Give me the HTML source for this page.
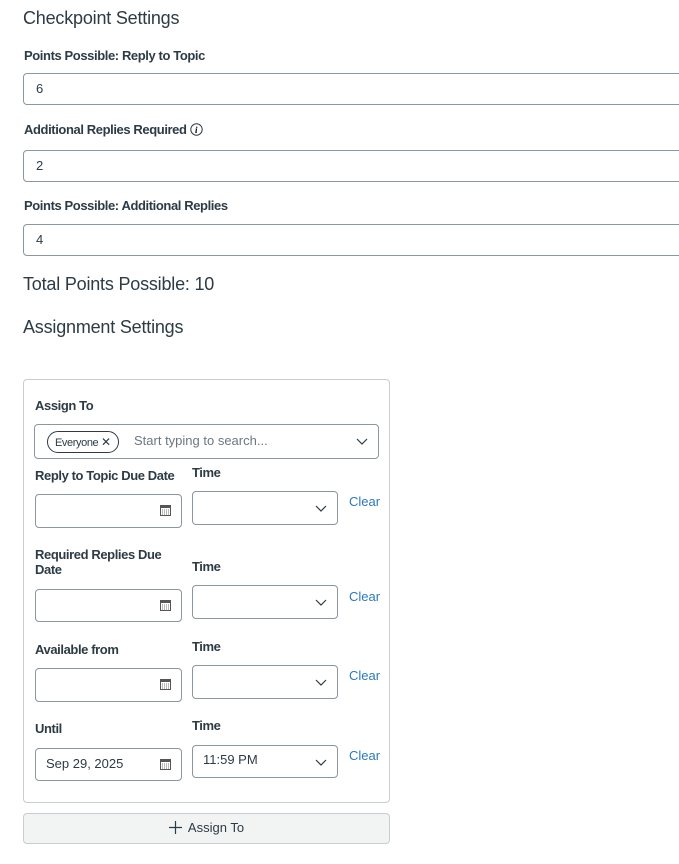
<!DOCTYPE html>
<html><head><style>
body{margin:0;width:679px;height:864px;overflow:hidden;background:#fff;font-family:"Liberation Sans",sans-serif;color:#2d3b45;position:relative}
.a{position:absolute}
h{position:absolute;font-size:18px;left:23px;letter-spacing:-0.2px}
.lb{position:absolute;font-size:13px;font-weight:bold;left:24px;letter-spacing:-0.4px}
.in{position:absolute;border:1px solid #8b969e;border-radius:4px;background:#fff;box-sizing:border-box;font-size:13px}
.tx{position:absolute;left:12px;top:7px}
.cal{position:absolute;right:10px;top:9px;width:11px;height:12px}
.chev{position:absolute;right:10px;top:10px}
.clr{position:absolute;left:349px;color:#2b7abc;font-size:13px}
.fl{position:absolute;left:35px;font-size:13px;font-weight:bold;line-height:15px;letter-spacing:-0.4px}
</style></head><body>
<h style="top:8px">Checkpoint Settings</h>
<div class="lb" style="top:48px">Points Possible: Reply to Topic</div>
<div class="in" style="left:23px;top:73px;width:670px;height:32px"><span class="tx">6</span></div>
<div class="lb" style="top:122px">Additional Replies Required <svg width="13" height="13" viewBox="0 0 13 13" style="vertical-align:-2px"><circle cx="6.5" cy="6.5" r="5.7" fill="none" stroke="#2d3b45" stroke-width="1"/><text x="5" y="10" font-size="9" font-style="italic" font-family="Liberation Serif">i</text></svg></div>
<div class="in" style="left:23px;top:150px;width:670px;height:32px"><span class="tx">2</span></div>
<div class="lb" style="top:198px">Points Possible: Additional Replies</div>
<div class="in" style="left:23px;top:224px;width:670px;height:32px"><span class="tx">4</span></div>
<h style="top:274px">Total Points Possible: 10</h>
<h style="top:317px">Assignment Settings</h>

<div class="a" style="left:23px;top:379px;width:367px;height:424px;border:1px solid #c7cdd1;border-radius:4px;box-sizing:border-box"></div>
<div class="fl" style="top:398px">Assign To</div>
<div class="in" style="left:34px;top:424px;width:345px;height:35px">
 <span class="a" style="left:12px;top:6px;height:20px;border:1px solid #2d3b45;border-radius:11px;padding:0 7px;font-size:11px;line-height:20px;letter-spacing:-0.4px">Everyone <span style="font-size:12px">✕</span></span>
 <span class="a" style="left:99px;top:8px;color:#6b7780">Start typing to search...</span>
 <svg class="chev" width="12" height="8" viewBox="0 0 12 8" style="top:13px"><path d="M1 1l5 5 5-5" fill="none" stroke="#2d3b45" stroke-width="1.2"/></svg>
</div>

<div class="fl" style="top:468px">Reply to Topic Due Date</div>
<div class="fl" style="left:192px;top:465px">Time</div>
<div class="in" style="left:35px;top:494px;width:147px;height:34px"><svg class="cal" viewBox="0 0 11 12"><rect x="0.5" y="1.5" width="10" height="10" fill="#fff" stroke="#555"/><rect x="0.5" y="1.5" width="10" height="2.5" fill="#555"/><path d="M2 6h7M2 8h7M2 10h7" stroke="#777" stroke-dasharray="1 1"/></svg></div>
<div class="in" style="left:192px;top:491px;width:146px;height:34px"><svg class="chev" width="12" height="8" viewBox="0 0 12 8" style="top:13px"><path d="M1 1l5 5 5-5" fill="none" stroke="#2d3b45" stroke-width="1.2"/></svg></div>
<div class="clr" style="top:494px">Clear</div>

<div class="fl" style="top:547px">Required Replies Due<br>Date</div>
<div class="fl" style="left:192px;top:559px">Time</div>
<div class="in" style="left:35px;top:589px;width:147px;height:33px"><svg class="cal" viewBox="0 0 11 12"><rect x="0.5" y="1.5" width="10" height="10" fill="#fff" stroke="#555"/><rect x="0.5" y="1.5" width="10" height="2.5" fill="#555"/><path d="M2 6h7M2 8h7M2 10h7" stroke="#777" stroke-dasharray="1 1"/></svg></div>
<div class="in" style="left:192px;top:585px;width:146px;height:34px"><svg class="chev" width="12" height="8" viewBox="0 0 12 8" style="top:13px"><path d="M1 1l5 5 5-5" fill="none" stroke="#2d3b45" stroke-width="1.2"/></svg></div>
<div class="clr" style="top:589px">Clear</div>

<div class="fl" style="top:642px">Available from</div>
<div class="fl" style="left:192px;top:639px">Time</div>
<div class="in" style="left:35px;top:668px;width:147px;height:34px"><svg class="cal" viewBox="0 0 11 12"><rect x="0.5" y="1.5" width="10" height="10" fill="#fff" stroke="#555"/><rect x="0.5" y="1.5" width="10" height="2.5" fill="#555"/><path d="M2 6h7M2 8h7M2 10h7" stroke="#777" stroke-dasharray="1 1"/></svg></div>
<div class="in" style="left:192px;top:665px;width:146px;height:34px"><svg class="chev" width="12" height="8" viewBox="0 0 12 8" style="top:13px"><path d="M1 1l5 5 5-5" fill="none" stroke="#2d3b45" stroke-width="1.2"/></svg></div>
<div class="clr" style="top:668px">Clear</div>

<div class="fl" style="top:721px">Until</div>
<div class="fl" style="left:192px;top:718px">Time</div>
<div class="in" style="left:35px;top:748px;width:147px;height:33px"><span class="tx" style="left:10px;top:7px">Sep 29, 2025</span><svg class="cal" viewBox="0 0 11 12"><rect x="0.5" y="1.5" width="10" height="10" fill="#fff" stroke="#555"/><rect x="0.5" y="1.5" width="10" height="2.5" fill="#555"/><path d="M2 6h7M2 8h7M2 10h7" stroke="#777" stroke-dasharray="1 1"/></svg></div>
<div class="in" style="left:192px;top:745px;width:146px;height:33px"><span class="tx" style="left:10px;top:6px">11:59 PM</span><svg class="chev" width="12" height="8" viewBox="0 0 12 8" style="top:13px"><path d="M1 1l5 5 5-5" fill="none" stroke="#2d3b45" stroke-width="1.2"/></svg></div>
<div class="clr" style="top:748px">Clear</div>

<div class="a" style="left:23px;top:813px;width:367px;height:31px;background:#f2f4f4;border:1px solid #c7cdd1;border-radius:4px;box-sizing:border-box;font-size:13px;text-align:center;line-height:27px"><svg width="13" height="13" viewBox="0 0 13 13" style="vertical-align:-2px;margin-right:6px"><path d="M6.5 0v13M0 6.5h13" stroke="#2d3b45" stroke-width="1.2"/></svg>Assign To</div>
</body></html>
